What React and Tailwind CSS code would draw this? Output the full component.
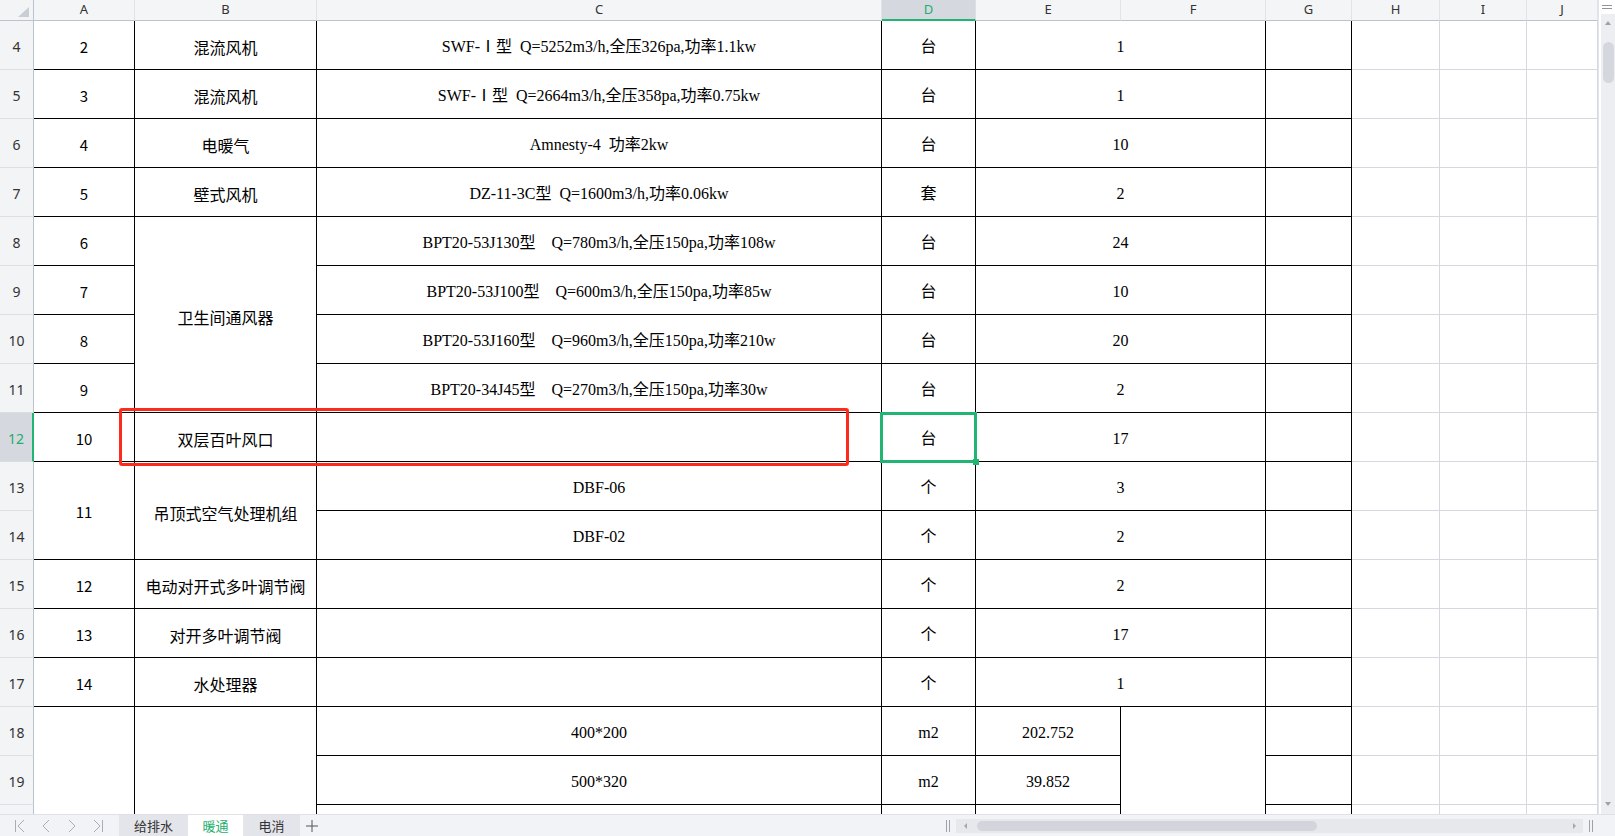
import React from 'react';

const SERIF = "font-['Liberation_Serif','Noto_Sans_CJK_SC',serif]";
const SANS = "font-['Noto_Sans_CJK_SC',sans-serif]";
const UI = "font-['Noto_Sans','Noto_Sans_CJK_SC',sans-serif]";

const cols = ['A', 'B', 'C', 'D', 'E', 'F', 'G', 'H', 'I', 'J'];

const Cell = ({ children, sans, className = '' }) => (
    <div className={`flex items-center justify-center whitespace-pre border-r border-b border-black pt-1 text-black ${sans ? SANS : SERIF} ${className}`}>
        {children}
    </div>
);

const Blank = () => <div className="border-r border-b border-[#d4d8df]" />;

const RowHead = ({ n, active }) => (
    <div
        className={
            active
                ? `flex items-center justify-center border-b border-r-2 border-b-[#d9dce2] border-r-[#21b573] bg-[#d5d8de] pt-[2px] text-[14px] text-[#1fae6e] ${UI}`
                : `flex items-center justify-center border-b border-r border-b-[#dcdfe4] border-r-[#bcc3ce] bg-[#f3f4f6] pt-[2px] text-[14px] text-[#333] ${UI}`
        }
    >
        {n}
    </div>
);

const Row = ({ n, a, b, c = '', d = '', e = '', aSpan = '', bSpan = '', skipA, skipB, split, fSpan = '', skipF, active }) => (
    <>
        <RowHead n={n} active={active} />
        {!skipA && <Cell sans className={`text-[15px] ${aSpan}`}>{a}</Cell>}
        {!skipB && <Cell sans className={`text-[16px] ${bSpan}`}>{b}</Cell>}
        <Cell className="text-[16px] [word-spacing:4px]">{c}</Cell>
        <Cell className="text-[16px]">{d}</Cell>
        {split ? <Cell className="text-[16px]">{e}</Cell> : <Cell className="col-span-2 text-[16px]">{e}</Cell>}
        {split && !skipF && <Cell className={fSpan} />}
        <Cell />
        <Blank />
        <Blank />
        <Blank />
    </>
);

const Arrow = ({ dir }) => (
    <svg width="6" height="6" viewBox="0 0 6 6" className="shrink-0">
        {dir === 'up' && <polygon points="0,5 3,1 6,5" fill="#9ca1aa" />}
        {dir === 'down' && <polygon points="0,1 3,5 6,1" fill="#9ca1aa" />}
        {dir === 'left' && <polygon points="4,0 1,3 4,6" fill="#a3a8b0" />}
        {dir === 'right' && <polygon points="2,0 5,3 2,6" fill="#a3a8b0" />}
    </svg>
);

const Split = () => (
    <svg width="4" height="12" viewBox="0 0 4 12" className="shrink-0">
        <line x1="0.5" y1="0" x2="0.5" y2="12" stroke="#9da2aa" />
        <line x1="3.5" y1="0" x2="3.5" y2="12" stroke="#9da2aa" />
    </svg>
);

const Nav = ({ kind }) => (
    <svg width="14" height="14" viewBox="0 0 14 14" fill="none" stroke="#a9aeb6" strokeWidth="1" className="shrink-0">
        {kind === 'first' && (
            <>
                <line x1="2.5" y1="1" x2="2.5" y2="13" />
                <polyline points="11,1 5,7 11,13" />
            </>
        )}
        {kind === 'prev' && <polyline points="10,1 4,7 10,13" />}
        {kind === 'next' && <polyline points="4,1 10,7 4,13" />}
        {kind === 'last' && (
            <>
                <polyline points="3,1 9,7 3,13" />
                <line x1="11.5" y1="1" x2="11.5" y2="13" />
            </>
        )}
    </svg>
);

export default function App() {
    return (
        <div className="flex h-[836px] w-[1615px] flex-col overflow-hidden bg-white">
            <div className="flex h-[814px]">
                <div className="relative h-[814px] w-[1598px] overflow-hidden bg-white">
                    <div className="grid grid-cols-[34px_101px_182px_565px_94px_145px_145px_86px_88px_87px_1fr] grid-rows-[21px_repeat(17,49px)]">
                        <div className="flex items-end justify-end border-r border-b border-r-[#bcc3ce] border-b-[#bcc3ce] bg-[#f3f4f6] pr-[4px] pb-[3px]">
                            <svg width="11" height="10" viewBox="0 0 11 10">
                                <polygon points="11,0 11,10 0,10" fill="#c9cdd4" />
                            </svg>
                        </div>
                        {cols.map((c) =>
                            c === 'D' ? (
                                <div key={c} className={`flex items-center justify-center border-r border-b-2 border-r-[#dcdfe4] border-b-[#21b573] bg-[#d5d8de] text-[13px] text-[#1fae6e] ${UI}`}>
                                    {c}
                                </div>
                            ) : (
                                <div key={c} className={`flex items-center justify-center border-r border-b border-r-[#e1e3e8] border-b-[#bcc3ce] bg-[#f4f5f7] text-[13px] text-[#333] ${UI}`}>
                                    {c}
                                </div>
                            )
                        )}

                        <Row n={4} a="2" b="混流风机" c="SWF-Ⅰ型 Q=5252m3/h,全压326pa,功率1.1kw" d="台" e="1" />
                        <Row n={5} a="3" b="混流风机" c="SWF-Ⅰ型 Q=2664m3/h,全压358pa,功率0.75kw" d="台" e="1" />
                        <Row n={6} a="4" b="电暖气" c="Amnesty-4 功率2kw" d="台" e="10" />
                        <Row n={7} a="5" b="壁式风机" c="DZ-11-3C型 Q=1600m3/h,功率0.06kw" d="套" e="2" />
                        <Row n={8} a="6" b="卫生间通风器" bSpan="row-span-4" c="BPT20-53J130型  Q=780m3/h,全压150pa,功率108w" d="台" e="24" />
                        <Row n={9} a="7" skipB c="BPT20-53J100型  Q=600m3/h,全压150pa,功率85w" d="台" e="10" />
                        <Row n={10} a="8" skipB c="BPT20-53J160型  Q=960m3/h,全压150pa,功率210w" d="台" e="20" />
                        <Row n={11} a="9" skipB c="BPT20-34J45型  Q=270m3/h,全压150pa,功率30w" d="台" e="2" />
                        <Row n={12} a="10" b="双层百叶风口" d="台" e="17" active />
                        <Row n={13} a="11" aSpan="row-span-2" b="吊顶式空气处理机组" bSpan="row-span-2" c="DBF-06" d="个" e="3" />
                        <Row n={14} skipA skipB c="DBF-02" d="个" e="2" />
                        <Row n={15} a="12" b="电动对开式多叶调节阀" d="个" e="2" />
                        <Row n={16} a="13" b="对开多叶调节阀" d="个" e="17" />
                        <Row n={17} a="14" b="水处理器" d="个" e="1" />
                        <Row n={18} aSpan="row-span-3" bSpan="row-span-3" c="400*200" d="m2" e="202.752" split fSpan="row-span-3" />
                        <Row n={19} skipA skipB c="500*320" d="m2" e="39.852" split skipF />
                        {/* row 20 is cut by the sheet tabs, its label sits below the fold */}
                        <Row n="" skipA skipB split skipF />
                    </div>

                    {/* annotation + selection */}
                    <div className="absolute left-[119px] top-[408px] h-[58px] w-[730px] rounded-[3px] border-[3px] border-[#fd2b1c]" />
                    <div className="absolute left-[880px] top-[412px] h-[51px] w-[97px] border-[3px] border-[#21b573]" />
                    <div className="absolute left-[973px] top-[459px] h-[6px] w-[6px] bg-[#21b573]" />
                </div>

                <div className="flex w-[17px] flex-col border-l border-[#e1e4e8] bg-white">
                    <div className="flex h-[14px] items-center justify-center">
                        <svg width="10" height="5" viewBox="0 0 10 5">
                            <line x1="0" y1="0.5" x2="10" y2="0.5" stroke="#8f949c" />
                            <line x1="0" y1="3.5" x2="10" y2="3.5" stroke="#8f949c" />
                        </svg>
                    </div>
                    <div className="ml-[2px] flex flex-1 flex-col items-center bg-[#eceef1]">
                        <div className="mt-[6px]">
                            <Arrow dir="up" />
                        </div>
                        <div className="mt-[16px] h-[41px] w-[11px] rounded-full bg-[#d4d7dd]" />
                        <div className="mt-auto mb-[7px]">
                            <Arrow dir="down" />
                        </div>
                    </div>
                </div>
            </div>

            <div className={`flex h-[22px] items-stretch border-t border-[#dfe1e6] bg-[#f2f3f6] text-[13px] text-[#333] ${SANS}`}>
                <div className="flex w-[119px] items-center gap-[12px] pl-[13px]">
                    <Nav kind="first" />
                    <Nav kind="prev" />
                    <Nav kind="next" />
                    <Nav kind="last" />
                </div>
                <div className="flex w-[69px] items-center justify-center bg-[#e3e5ea]">给排水</div>
                <div className="flex w-[55px] items-center justify-center bg-white text-[#1fae6e]">暖通</div>
                <div className="flex w-[57px] items-center justify-center bg-[#e3e5ea]">电消</div>
                <div className="ml-[5px] flex items-center">
                    <svg width="14" height="14" viewBox="0 0 14 14" stroke="#555" strokeWidth="1">
                        <line x1="7" y1="1" x2="7" y2="13" />
                        <line x1="1" y1="7" x2="13" y2="7" />
                    </svg>
                </div>
                <div className="flex-1" />
                <div className="flex w-[669px] items-center">
                    <Split />
                    <div className="ml-[6px] flex h-[14px] w-[627px] items-center bg-[#e6e8ec] pl-[7px] pr-[6px]">
                        <Arrow dir="left" />
                        <div className="ml-[8px] h-[10px] w-[340px] rounded-full bg-[#d2d5db]" />
                        <div className="flex-1" />
                        <Arrow dir="right" />
                    </div>
                    <div className="ml-[6px]">
                        <Split />
                    </div>
                </div>
            </div>
        </div>
    );
}
